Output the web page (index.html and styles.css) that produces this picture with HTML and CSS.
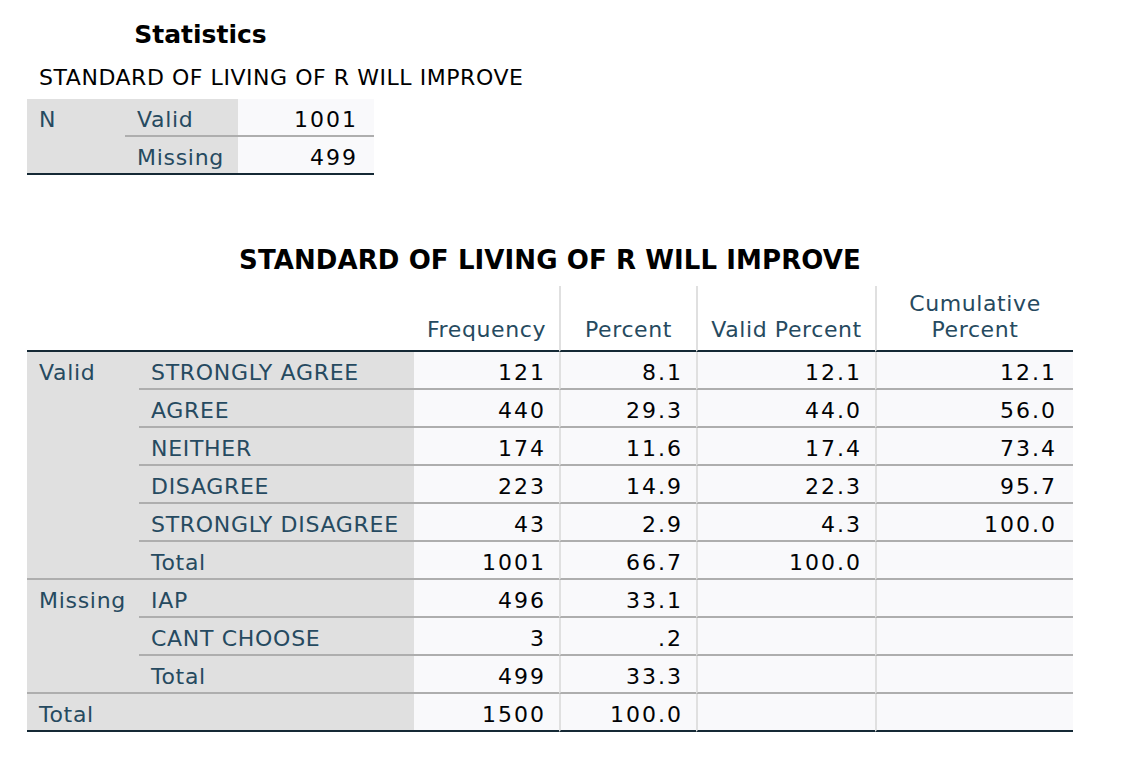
FILE: index.html
```html
<!DOCTYPE html>
<html lang="en">
<head>
<meta charset="utf-8">
<title>Statistics</title>
<link rel="stylesheet" href="styles.css">
</head>
<body>
<div class="page">
  <section class="stats">
    <h2 class="stats-title">Statistics</h2>
    <div class="caption">STANDARD OF LIVING OF R WILL IMPROVE</div>
    <table class="stats-table">
      <colgroup><col class="s1"><col class="s2"><col class="s3"></colgroup>
      <tbody>
        <tr>
          <th class="lab grp" rowspan="2">N</th>
          <th class="lab sep">Valid</th>
          <td class="num sep">1001</td>
        </tr>
        <tr>
          <th class="lab last">Missing</th>
          <td class="num last">499</td>
        </tr>
      </tbody>
    </table>
  </section>

  <section class="freq">
    <h2 class="freq-title">STANDARD OF LIVING OF R WILL IMPROVE</h2>
    <table class="freq-table">
      <colgroup>
        <col class="c1"><col class="c2"><col class="c3"><col class="c4"><col class="c5"><col class="c6">
      </colgroup>
      <thead>
        <tr>
          <th class="corner" colspan="2"></th>
          <th class="head">Frequency</th>
          <th class="head vl">Percent</th>
          <th class="head vl">Valid Percent</th>
          <th class="head vl">Cumulative<br>Percent</th>
        </tr>
      </thead>
      <tbody>
        <tr>
          <th class="lab grp sep" rowspan="6">Valid</th>
          <th class="lab sep">STRONGLY AGREE</th>
          <td class="num sep">121</td><td class="num sep vl">8.1</td><td class="num sep vl">12.1</td><td class="num sep vl cum">12.1</td>
        </tr>
        <tr>
          <th class="lab sep">AGREE</th>
          <td class="num sep">440</td><td class="num sep vl">29.3</td><td class="num sep vl">44.0</td><td class="num sep vl cum">56.0</td>
        </tr>
        <tr>
          <th class="lab sep">NEITHER</th>
          <td class="num sep">174</td><td class="num sep vl">11.6</td><td class="num sep vl">17.4</td><td class="num sep vl cum">73.4</td>
        </tr>
        <tr>
          <th class="lab sep">DISAGREE</th>
          <td class="num sep">223</td><td class="num sep vl">14.9</td><td class="num sep vl">22.3</td><td class="num sep vl cum">95.7</td>
        </tr>
        <tr>
          <th class="lab sep">STRONGLY DISAGREE</th>
          <td class="num sep">43</td><td class="num sep vl">2.9</td><td class="num sep vl">4.3</td><td class="num sep vl cum">100.0</td>
        </tr>
        <tr>
          <th class="lab sep">Total</th>
          <td class="num sep">1001</td><td class="num sep vl">66.7</td><td class="num sep vl">100.0</td><td class="num sep vl cum"></td>
        </tr>
        <tr>
          <th class="lab grp sep" rowspan="3">Missing</th>
          <th class="lab sep">IAP</th>
          <td class="num sep">496</td><td class="num sep vl">33.1</td><td class="num sep vl"></td><td class="num sep vl cum"></td>
        </tr>
        <tr>
          <th class="lab sep">CANT CHOOSE</th>
          <td class="num sep">3</td><td class="num sep vl">.2</td><td class="num sep vl"></td><td class="num sep vl cum"></td>
        </tr>
        <tr>
          <th class="lab sep">Total</th>
          <td class="num sep">499</td><td class="num sep vl">33.3</td><td class="num sep vl"></td><td class="num sep vl cum"></td>
        </tr>
        <tr>
          <th class="lab last" colspan="2">Total</th>
          <td class="num last">1500</td><td class="num last vl">100.0</td><td class="num last vl"></td><td class="num last vl cum"></td>
        </tr>
      </tbody>
    </table>
  </section>
</div>
</body>
</html>
```

FILE: styles.css
```css
* {
  box-sizing: border-box;
}

html, body {
  margin: 0;
  padding: 0;
  background: #ffffff;
}

body {
  font-family: "DejaVu Sans", "Liberation Sans", sans-serif;
  color: #010205;
}

.page {
  padding: 20px 0 0 27px;
}

/* ---------- Statistics block ---------- */
.stats {
  width: 347px;
}

.stats-title {
  margin: 0;
  font-size: 25px;
  line-height: 30px;
  font-weight: bold;
  text-align: center;
  color: #000000;
}

.caption {
  margin-top: 16px;
  padding-left: 12px;
  font-size: 22px;
  line-height: 24px;
  letter-spacing: 0.55px;
  white-space: nowrap;
  color: #000000;
}

.stats-table {
  margin-top: 9px;
  width: 347px;
  table-layout: fixed;
  border-collapse: separate;
  border-spacing: 0;
}

.s1 { width: 98px; }
.s2 { width: 113px; }
.s3 { width: 136px; }

/* ---------- shared cell styles ---------- */
.lab,
.num {
  height: 38px;
  padding: 9px 0 0 0;
  font-size: 22px;
  line-height: 24px;
  font-weight: normal;
  vertical-align: top;
  white-space: nowrap;
}

.lab {
  text-align: left;
  padding-left: 12px;
  letter-spacing: 0.7px;
  background: #e0e0e0;
  color: #264a60;
}

.num {
  text-align: right;
  padding-right: 13px;
  letter-spacing: 2px;
  background: #f9f9fb;
  color: #010205;
}

.num.cum {
  padding-right: 16px;
}

.stats-table .num {
  padding-right: 16px;
}

.sep {
  border-bottom: 2px solid #aeaeae;
}

.last {
  border-bottom: 2px solid #152935;
}

.stats-table .grp {
  border-bottom: 2px solid #152935;
}

.vl {
  border-left: 2px solid #e0e0e0;
}

/* ---------- Frequency table ---------- */
.freq {
  margin-top: 70px;
  width: 1046px;
}

.freq-title {
  margin: 0;
  font-size: 26px;
  line-height: 30px;
  font-weight: bold;
  letter-spacing: 0.1px;
  text-align: center;
  color: #000000;
}

.freq-table {
  margin-top: 11px;
  width: 1046px;
  table-layout: fixed;
  border-collapse: separate;
  border-spacing: 0;
}

.c1 { width: 112px; }
.c2 { width: 275px; }
.c3 { width: 145px; }
.c4 { width: 137px; }
.c5 { width: 179px; }
.c6 { width: 198px; }

.corner,
.head {
  height: 66px;
  padding: 0 0 7px 0;
  border-bottom: 2px solid #152935;
  background: #ffffff;
  vertical-align: bottom;
}

.head {
  font-size: 22px;
  line-height: 26px;
  font-weight: normal;
  letter-spacing: 0.6px;
  text-align: center;
  color: #264a60;
}
```
